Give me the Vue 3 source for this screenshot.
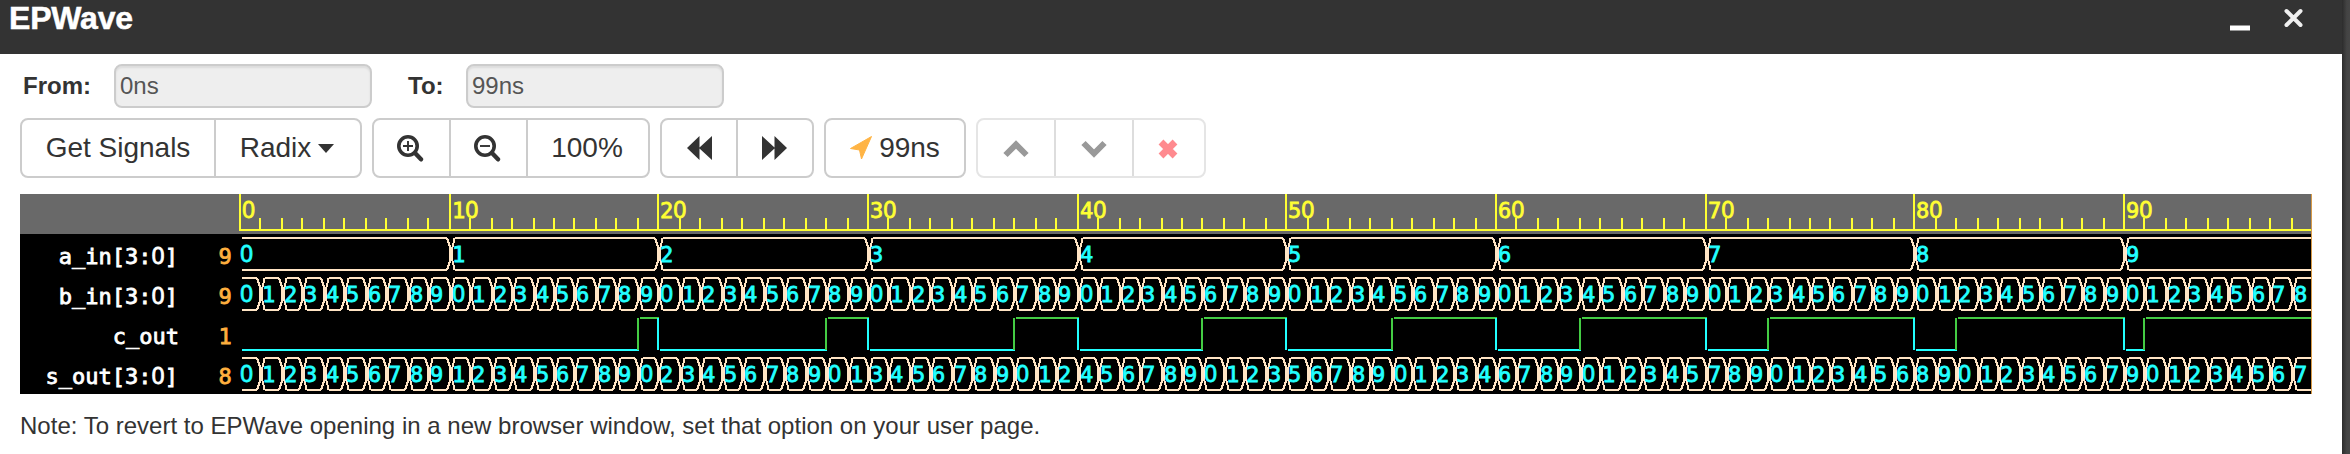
<script setup>
const X = (t) => 2 * Math.round(120 + t * 10.4667) - 20
const END = 2292
const ticks = Array.from({ length: 99 }, (_, t) => ({ t, x: X(t), major: t % 10 === 0 }))

const bus = (fn, step) => {
  const cells = []
  for (let t = 0; t < 99; t += step) {
    cells.push({ t, x: X(t), e: t + step >= 99 ? null : X(t + step), v: fn(t) })
  }
  return cells
}
const cellPath = (c, y) => {
  const top = y + 4
  const bot = y + 36
  const l = c.x + 2
  const r = c.e === null ? END : c.e
  let d = c.t === 0
    ? `M${l} ${top}H${r - 3} M${l} ${bot}H${r - 3}`
    : `M${l} ${y + 20}V${y + 15}L${l + 2} ${top + 3}V${top + 1}L${l + 4} ${top}H${r - 3} M${l} ${y + 20}V${y + 25}L${l + 2} ${bot - 3}V${bot - 1}L${l + 4} ${bot}H${r - 3}`
  if (c.e !== null) {
    d += ` M${r - 3} ${top}L${r - 2} ${top + 3}L${r} ${y + 13}V${y + 27}L${r - 2} ${bot - 3}L${r - 3} ${bot}`
  } else {
    d += ` M${r - 3} ${top}H${END} M${r - 3} ${bot}H${END}`
  }
  return d
}
const digit = (n) => n % 10
const buses = [
  { y: 40, cells: bus((t) => t / 10, 10) },
  { y: 80, cells: bus((t) => digit(t), 1) },
  { y: 160, cells: bus((t) => digit(Math.floor(t / 10) + (t % 10)), 1) },
]
const lows = []
const highs = []
const rises = []
const falls = []
let from = 0
for (let k = 1; k <= 9; k++) {
  const rise = k * 10 + (10 - k)
  const fall = (k + 1) * 10
  lows.push({ a: X(from) + 2, b: X(rise) + 1 })
  rises.push(X(rise))
  highs.push({ a: X(rise) + 2, b: fall > 90 ? END : X(fall) + 1 })
  if (fall <= 90) falls.push(X(fall))
  from = fall
}
const labels = [
  { name: 'a_in[3:0]', v: '9', y: 69.5 },
  { name: 'b_in[3:0]', v: '9', y: 109.5 },
  { name: 'c_out', v: '1', y: 149.5 },
  { name: 's_out[3:0]', v: '8', y: 189.5 },
]
for (const l of labels) {
  l.chars = [...l.name].map((c, i) => ({ c, x: 158 - (l.name.length - i) * 13.24 + (l.name === 'c_out' ? 1 : 0) }))
}
</script>

<template>
  <div class="page">
    <div class="window">
      <header>
        <h1>EPWave</h1>
        <svg class="controls" width="80" height="30" viewBox="0 0 80 30">
          <path d="M4 22H24" stroke="#fff" stroke-width="5" />
          <path d="M60.5 5L74.500 19M74.500 5L60.500 19" stroke="#f0f0f0" stroke-width="4" stroke-linecap="round" />
        </svg>
      </header>
      <div class="range">
        <label class="from">From:</label><div class="field">0ns</div>
        <label class="to">To:</label><div class="field">99ns</div>
      </div>
      <div class="toolbar">
        <div class="group g1">
          <button>Get Signals</button>
          <button class="nudge">Radix<svg class="caret" width="16" height="9"><path d="M0 0H16L8 9Z" /></svg></button>
        </div>
        <div class="group g2">
          <button class="nudge"><svg width="27" height="27" viewBox="0 0 27 27"><g fill="none" stroke="#333"><circle cx="11" cy="11" r="9.2" stroke-width="3.6" /><path d="M18 18L24 24.3" stroke-width="4.4" stroke-linecap="round" /><path d="M6 11H16M11 6V16" stroke-width="1.9" /></g></svg></button>
          <button class="nudge"><svg width="27" height="27" viewBox="0 0 27 27"><g fill="none" stroke="#333"><circle cx="11" cy="11" r="9.2" stroke-width="3.6" /><path d="M18 18L24 24.3" stroke-width="4.4" stroke-linecap="round" /><path d="M6 11H16" stroke-width="1.9" /></g></svg></button>
          <button class="nudge">100%</button>
        </div>
        <div class="group g3">
          <button><svg width="25" height="24" viewBox="0 0 25 24"><path d="M0 12L12.5 0V11.5L25 0V24L12.5 12.5V24Z" fill="#333" /></svg></button>
          <button class="nudge"><svg width="25" height="24" viewBox="0 0 25 24"><path d="M25 12L12.5 0V11.5L0 0V24L12.5 12.5V24Z" fill="#333" /></svg></button>
        </div>
        <div class="group g4">
          <button><svg class="nav" width="22" height="24" viewBox="0 0 22 24"><path d="M21.500 .5L11.5 23L9.5 14L.5 12.500Z" fill="#ffb445" stroke="#ffb445" stroke-linejoin="round" /></svg>99ns</button>
        </div>
        <div class="group g5">
          <button><svg width="26" height="18" viewBox="0 0 26 18"><path d="M2.500 15L13 4.500L23.500 15" fill="none" stroke="#999" stroke-width="6" /></svg></button>
          <button><svg width="26" height="18" viewBox="0 0 26 18"><path d="M2.500 3L13 13.500L23.500 3" fill="none" stroke="#999" stroke-width="6" /></svg></button>
          <button class="nudge"><svg width="20" height="20" viewBox="0 0 20 20"><path d="M3 3L17 17M17 3L3 17" stroke="#ff8a8f" stroke-width="6.8" /></svg></button>
        </div>
      </div>
      <svg class="wave" width="2292" height="200" viewBox="0 0 2292 200">
        <rect width="2292" height="200" fill="#000" />
        <rect width="2292" height="40" fill="#696969" />
        <g shape-rendering="crispEdges" stroke="#ffff33" stroke-width="2">
          <path d="M219 36H2292" />
          <path v-for="k in ticks" :key="k.t" :d="`M${k.x} ${k.major ? 0 : 24}V36`" />
        </g>
        <g class="mono yellow">
          <template v-for="k in ticks" :key="k.t">
            <template v-if="k.major">
              <text v-for="(c, i) in String(k.t)" :key="i" :x="k.x + 2 + i * 13.24" y="24" :class="{ zero: c === '0' }">{{ c }}</text>
            </template>
          </template>
        </g>
        <g class="mono">
          <g v-for="l in labels" :key="l.name">
            <text v-for="(c, i) in l.chars" :key="i" :x="c.x" :y="l.y" class="white" :class="{ zero: c.c === '0' }">{{ c.c }}</text>
            <text x="198.5" :y="l.y" class="orange">{{ l.v }}</text>
          </g>
        </g>
        <g v-for="b in buses" :key="b.y">
          <path v-for="c in b.cells" :key="c.t" :d="cellPath(c, b.y)" fill="none" stroke="#ffe4c4" stroke-width="2" shape-rendering="crispEdges" />
          <g class="mono cyan">
            <text v-for="c in b.cells" :key="c.t" :x="c.x + (c.t ? 2 : 0)" :y="b.y + 27.5" :class="{ zero: c.v === 0 }">{{ c.v }}</text>
          </g>
        </g>
        <g shape-rendering="crispEdges" stroke-width="2">
          <path v-for="l in lows" :key="l.a" :d="`M${l.a} 156H${l.b}`" stroke="#22ffff" />
          <path v-for="h in highs" :key="h.a" :d="`M${h.a} 124H${h.b}`" stroke="#44cc44" />
          <path v-for="r in rises" :key="r" :d="`M${r} 124V156`" stroke="#44cc44" />
          <path v-for="f in falls" :key="f" :d="`M${f} 124V156`" stroke="#22ffff" />
          <path d="M2291.500 0V200" stroke="#d69a48" stroke-width="1" />
        </g>
      </svg>
      <p class="note">Note: To revert to EPWave opening in a new browser window, set that option on your user page.</p>
    </div>
    <div class="edge"></div>
  </div>
</template>

<style scoped>
.page { width: 2350px; height: 454px; display: flex; overflow: hidden; font-family: "Liberation Sans", Arial, sans-serif; color: #333; background: #fff; }
.window { width: 2342px; flex: none; }
.edge { flex: 1; background: linear-gradient(90deg, #2c2c2c, #444 60%, #464646); }
header { height: 54px; background: #333; display: flex; justify-content: space-between; }
h1 { margin: -7px 0 0 9px; font-size: 32px; letter-spacing: -.2px; line-height: 50px; height: 50px; color: #fff; -webkit-text-stroke: .5px #fff; }
.controls { margin: 6px 36px 0 0; }
.range { display: flex; padding-top: 10px; height: 54px; box-sizing: border-box; font-size: 24px; line-height: 44px; }
label { font-weight: bold; box-sizing: border-box; flex: none; }
.from { width: 114px; padding-left: 23px; }
.to { width: 94px; padding-left: 36px; }
.field { box-sizing: border-box; width: 258px; height: 44px; border: 2px solid #ccc; border-radius: 8px; background: #eee; color: #555; padding-left: 4px; line-height: 40px; box-shadow: inset 0 2px 2px rgba(0,0,0,.075); }
.toolbar { display: flex; padding: 10px 0 0 20px; height: 70px; box-sizing: border-box; }
.group { display: grid; height: 60px; box-sizing: border-box; border: 2px solid #ccc; border-radius: 8px; margin-right: 10px; }
button { border: 0; border-left: 2px solid #ccc; background: none; padding: 0; margin: 0; font: 28px/56px "Liberation Sans", Arial, sans-serif; color: #333; display: flex; align-items: center; justify-content: center; white-space: nowrap; }
button:first-child { border-left: 0; }
.nudge { padding-right: 2px; }
.g1 { width: 342px; grid-template-columns: 192px 1fr; }
.g2 { width: 278px; grid-template-columns: 75px 77px 1fr; }
.g3 { width: 154px; grid-template-columns: 74px 1fr; }
.g4 { width: 142px; }
.g5 { width: 230px; grid-template-columns: 76px 78px 1fr; border-color: #e5e5e5; }
.g5 button { border-color: #ddd; padding-top: 2px; }
.caret { margin-left: 7px; fill: #333; }
.nav { margin-right: 7px; }
.wave { display: block; margin: 16px 0 0 20px; }
.mono { font-family: "DejaVu Sans Mono", monospace; font-size: 22px; }
.zero { font-family: "Noto Sans", sans-serif; font-size: 23px; }
.yellow, .cyan, .white, .orange { stroke-width: .8px; }
.yellow { fill: #ffff33; stroke: #ffff33; }
.cyan { fill: #22ffff; stroke: #22ffff; }
.white { fill: #fff; stroke: #fff; }
.orange { fill: #ffb03f; stroke: #ffb03f; }
.note { margin: 12px 0 0 20px; font-size: 24px; line-height: 40px; white-space: nowrap; letter-spacing: .01px; }
</style>
